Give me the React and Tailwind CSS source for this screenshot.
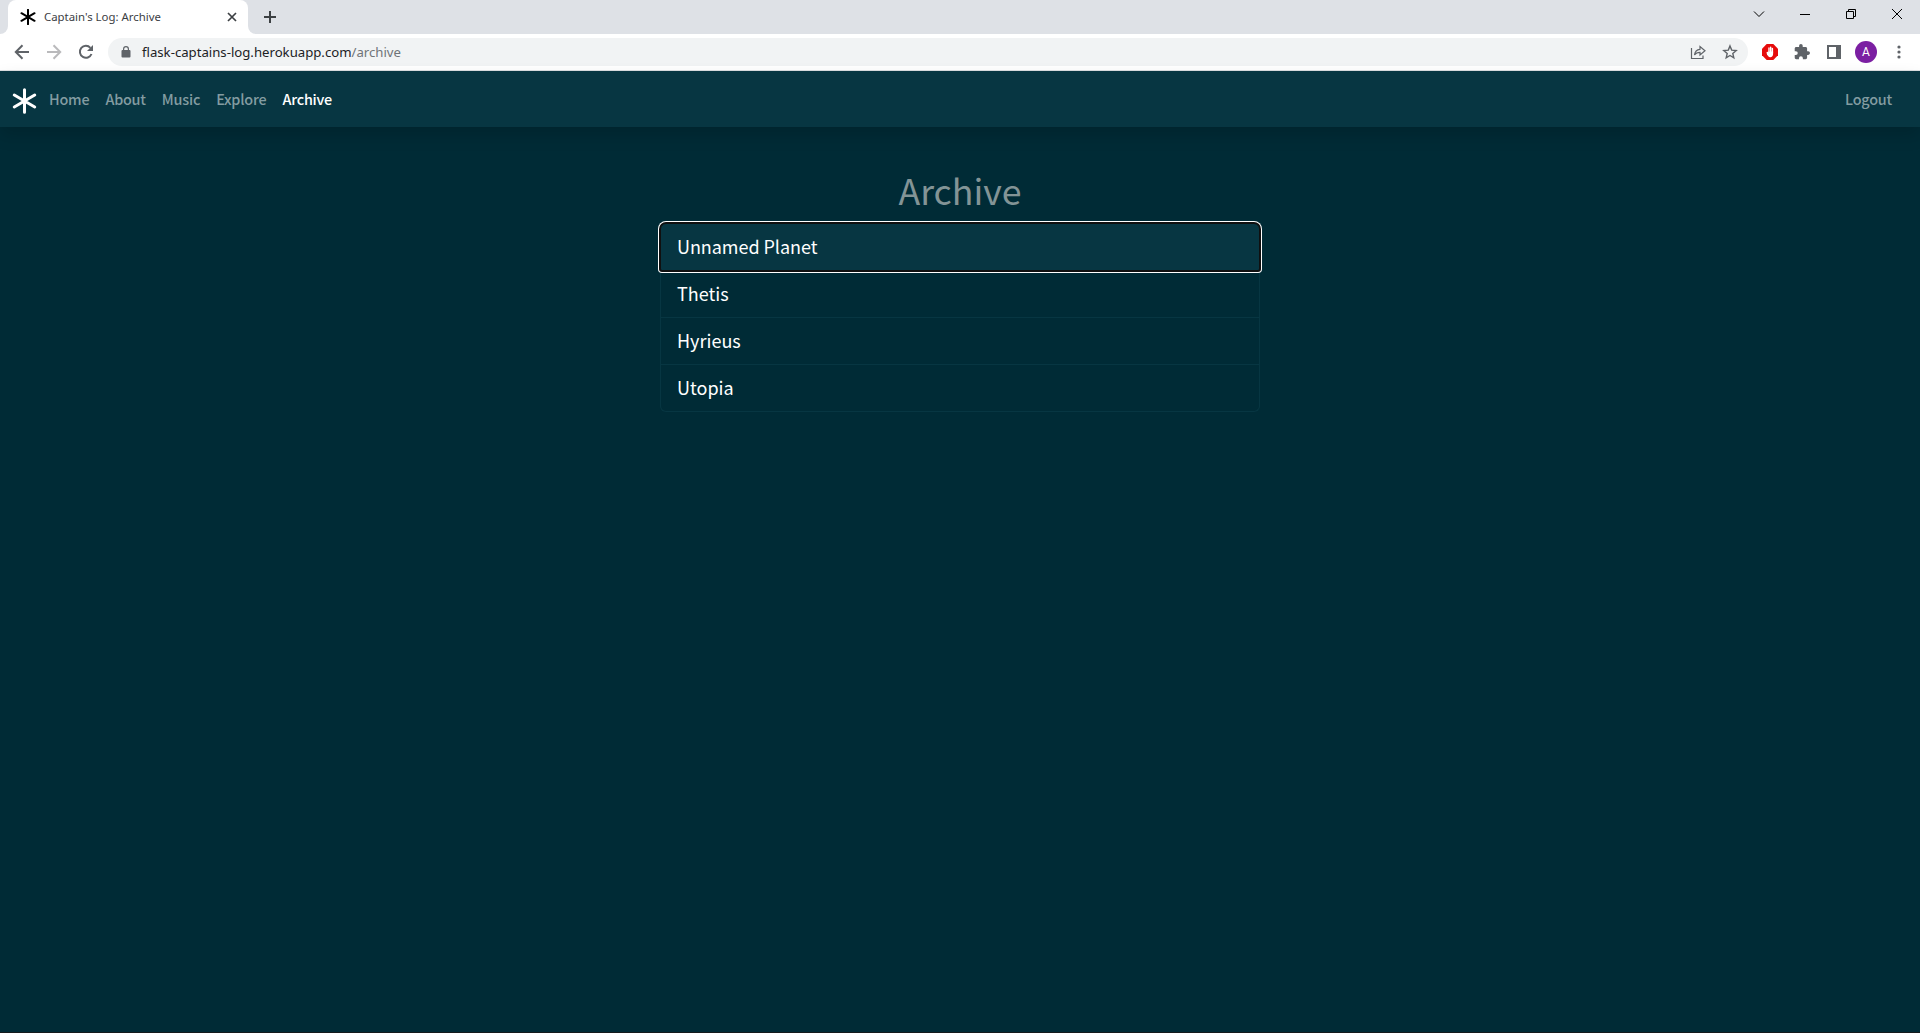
const Asterisk = ({ className, stroke }) => (
  <svg viewBox="0 0 24 24" className={className} fill="none" stroke="currentColor" strokeWidth={stroke} strokeLinecap="round">
    <path d="M12 1.2v21.6M2.2 6.3l19.6 11.4M2.2 17.7L21.8 6.3" />
  </svg>
);

const TabStrip = () => (
  <div className="flex h-[34px] shrink-0 bg-[#dee1e6]">
    <div className="flex w-2 items-end bg-white">
      <div className="h-full w-full rounded-br-lg bg-[#dee1e6]" />
    </div>
    <div className="bg-[#dee1e6]">
      <div className="flex h-full w-[240px] items-center rounded-t-lg bg-white pl-3 pr-[10px] text-[#3c4043]">
        <Asterisk className="h-4 w-4 text-black" stroke={3} />
        <span className="ml-2 flex-1 whitespace-nowrap text-[11.4px]">Captain's Log: Archive</span>
        <svg viewBox="0 0 12 12" className="h-3 w-3" fill="none" stroke="#3c4043" strokeWidth="1.7"><path d="M2 2l8 8M10 2l-8 8" /></svg>
      </div>
    </div>
    <div className="w-2 bg-white">
      <div className="h-full w-full rounded-bl-lg bg-[#dee1e6]" />
    </div>
    <svg viewBox="0 0 12 12" className="ml-2 mt-[11px] h-3 w-3" stroke="#3c4043" strokeWidth="2"><path d="M6 0v12M0 6h12" /></svg>
    <div className="ml-auto flex pt-2 text-black">
      <svg viewBox="0 0 46 12" className="h-3 w-[46px]" fill="none" stroke="currentColor"><path d="M18 3.500l5 5 5-5" /></svg>
      <svg viewBox="0 0 46 12" className="h-3 w-[46px]" fill="none" stroke="currentColor"><path d="M18 6.5h10" /></svg>
      <svg viewBox="0 0 46 12" className="h-3 w-[46px]" fill="none" stroke="currentColor"><path d="M18.500 3.500h7v7h-7zM20.500 3.500v-2h7v7h-2" /></svg>
      <svg viewBox="0 0 46 12" className="h-3 w-[46px]" fill="none" stroke="currentColor"><path d="M18 1l10 10M28 1L18 11" /></svg>
    </div>
  </div>
);

const Toolbar = () => (
  <div className="flex h-9 shrink-0 items-center bg-white text-[#5f6368]">
    <svg viewBox="0 0 16 16" className="ml-[14px] h-4 w-4" fill="none" stroke="currentColor" strokeWidth="2"><path d="M15 8H2M8.500 1.300L1.800 8l6.700 6.700" /></svg>
    <svg viewBox="0 0 16 16" className="ml-4 h-4 w-4" fill="none" stroke="#bababc" strokeWidth="2"><path d="M1 8h13M7.500 1.300L14.200 8l-6.700 6.700" /></svg>
    <svg viewBox="0 0 16 16" className="ml-4 h-4 w-4" fill="none" stroke="currentColor" strokeWidth="2"><path d="M13.500 10A6 6 0 1 1 12.400 3.800" /><path d="M15 1v6H9z" fill="currentColor" stroke="none" /></svg>
    <div className="ml-[14px] flex h-7 flex-1 items-center rounded-full bg-[#f1f3f4] pl-[13px] pr-[10px]">
      <svg viewBox="0 0 10 12" className="h-3 w-[10px]"><path d="M1.500 4h7A1 1 0 0 1 9.500 5v5.500a1 1 0 0 1-1 1h-7a1 1 0 0 1-1-1V5a1 1 0 0 1 1-1z" fill="#5f6368" /><path d="M2.600 4.500V3a2.400 2.400 0 0 1 4.800 0v1.500" fill="none" stroke="#5f6368" strokeWidth="1.200" /></svg>
      <span className="ml-[11px] whitespace-nowrap pt-[2px] text-[13.2px] tracking-[-0.01px] text-[#202124]">flask-captains-log.herokuapp.com<span className="text-[#6f7378]">/archive</span></span>
      <svg viewBox="0 0 16 16" className="ml-auto h-4 w-4" fill="none" stroke="currentColor" strokeWidth="1.200"><path d="M1.500 4v10.500h11.500v-3" /><path d="M4.500 11c.4-3.500 2.300-5.500 5.500-5.700V2.500L15 6.800l-5 4.200V8.300C7.600 8.300 5.800 9 4.500 11z" /></svg>
      <svg viewBox="0 0 16 16" className="ml-4 h-4 w-4" fill="none" stroke="currentColor" strokeWidth="1.400"><path d="M8 1.900l1.700 4.200 4.500.4-3.400 2.900 1 4.400L8 11.500l-3.800 2.300 1-4.400-3.400-2.900 4.500-.4z" /></svg>
    </div>
    <svg viewBox="0 0 16 16" className="ml-[14px] h-4 w-4"><path d="M4.700 0h6.600L16 4.700v6.600L11.300 16H4.700L0 11.300V4.700z" fill="#e60b0b" /><path d="M5.400 8.500l.3 2M7 4v5M8.700 3.200V9M10.400 4.500V9" stroke="#fff" strokeWidth="1.400" strokeLinecap="round" /><path d="M4.500 8.500l1.800.5V7.500h4.800V10c0 1.700-1 3.200-2.900 3.200C6.500 13.200 5.500 11.500 4.500 8.500z" fill="#fff" /></svg>
    <svg viewBox="1 1 22 22" className="ml-4 h-4 w-4" fill="currentColor"><path d="M20.500 11H19V7c0-1.100-.9-2-2-2h-4V3.500a2.500 2.500 0 0 0-5 0V5H4c-1.100 0-2 .9-2 2v3.800h1.500a2.700 2.700 0 0 1 0 5.400H2V20c0 1.100.9 2 2 2h3.800v-1.500a2.700 2.700 0 0 1 5.400 0V22H17c1.100 0 2-.9 2-2v-4h1.500a2.500 2.500 0 0 0 0-5z" /></svg>
    <svg viewBox="0 0 14 14" className="ml-[17px] h-[14px] w-[14px]"><path d="M0 0h14v14H0zM2 2v10h7V2z" fill="currentColor" fillRule="evenodd" /></svg>
    <span className="ml-[14px] flex h-[22px] w-[22px] items-center justify-center rounded-full bg-[#7b1fa2] font-[Roboto] text-[12px] text-white">A</span>
    <svg viewBox="0 0 4 14" className="ml-5 mr-[19px] h-[14px] w-1" fill="currentColor"><circle cx="2" cy="2" r="1.600" /><circle cx="2" cy="7" r="1.600" /><circle cx="2" cy="12" r="1.600" /></svg>
  </div>
);

const Navbar = () => (
  <nav className="flex h-14 shrink-0 items-center bg-[#073642] pl-3 pr-7 text-[14.4px] font-medium tracking-[-0.21px] text-[#839ca1] shadow-[0_8px_16px_rgba(0,0,0,0.15)]">
    <Asterisk className="mt-1 h-[26px] w-[25px] text-white" stroke={2.900} />
    <div className="ml-3 flex gap-4">
      {["Home", "About", "Music", "Explore"].map((label) => <a key={label}>{label}</a>)}
      <a className="text-white">Archive</a>
    </div>
    <a className="ml-auto">Logout</a>
  </nav>
);

const planets = ["Unnamed Planet", "Thetis", "Hyrieus", "Utopia"];

export default function App() {
  return (
    <div className="flex h-[1033px] w-[1920px] flex-col overflow-hidden border-b border-[#151a1c] bg-[#002b36] font-['Noto_Sans',sans-serif]">
      <TabStrip />
      <Toolbar />
      <div className="h-px shrink-0 bg-[#dcdfe1]" />
      <div className="flex flex-1 flex-col font-['Noto_Sans_CJK_SC',sans-serif]">
        <Navbar />
        <main className="mx-auto w-[600px] pt-[39px]">
          <h1 className="mb-[9px] text-center text-[35.700px] leading-[48px] text-[#839496]">Archive</h1>
          <ul className="text-[18px] leading-[30px] text-white">
            {planets.map((name, i) => (
              <li
                key={name}
                className={
                  i === 0
                    ? "relative rounded-b-[2px] rounded-t-md border border-[#101010] bg-[#073642] px-4 pb-[9px] pt-[7px] tracking-[-0.05px] shadow-[0_0_0_1px_#101010,0_0_0_2px_#fff]"
                    : "border border-t-0 border-[#073642] px-4 pb-[9px] pt-[7px] last:rounded-b-md"
                }
              >
                {name}
              </li>
            ))}
          </ul>
        </main>
      </div>
    </div>
  );
}
